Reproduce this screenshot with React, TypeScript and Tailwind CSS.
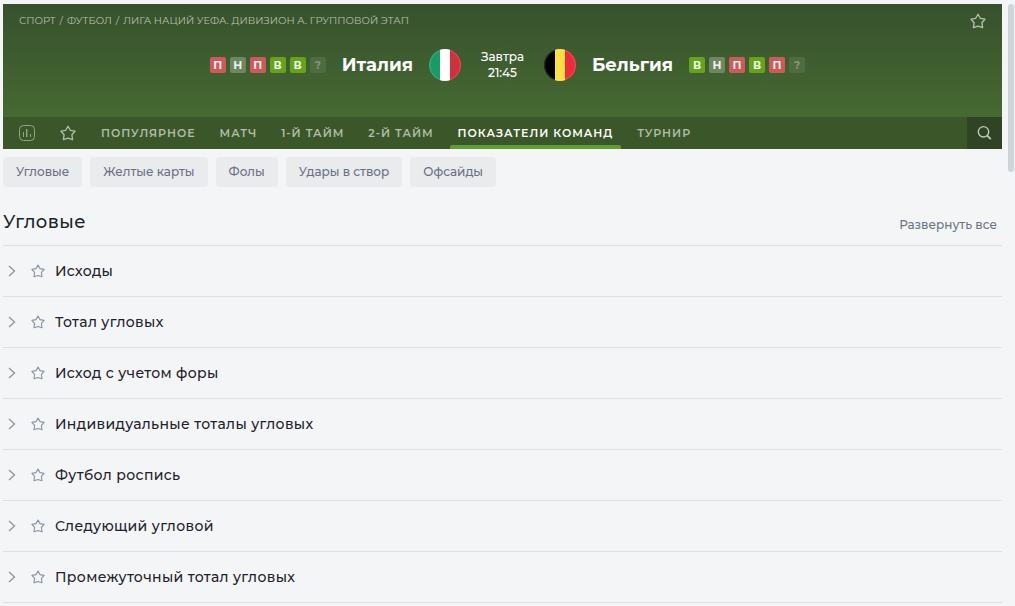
import { useState } from 'react';
import clsx from 'clsx';

type Result = 'П' | 'Н' | 'В' | '?';

const CRUMBS = ['СПОРТ', 'ФУТБОЛ', 'ЛИГА НАЦИЙ УЕФА. ДИВИЗИОН А. ГРУППОВОЙ ЭТАП'];

const HOME_FORM: Result[] = ['П', 'Н', 'П', 'В', 'В', '?'];
const AWAY_FORM: Result[] = ['В', 'Н', 'П', 'В', 'П', '?'];

const TABS = ['Популярное', 'Матч', '1-й тайм', '2-й тайм', 'Показатели команд', 'Турнир'];

const FILTERS = ['Угловые', 'Желтые карты', 'Фолы', 'Удары в створ', 'Офсайды'];

const MARKETS = [
  'Исходы',
  'Тотал угловых',
  'Исход с учетом форы',
  'Индивидуальные тоталы угловых',
  'Футбол роспись',
  'Следующий угловой',
  'Промежуточный тотал угловых',
];

const RESULT_STYLE: Record<Result, string> = {
  П: 'bg-[#cd5a5a] text-white/90',
  Н: 'bg-[#6d8763] text-white/90',
  В: 'bg-[#66a31a] text-white/90',
  '?': 'bg-[#4e6b41] text-[#84977b]',
};

function StarIcon({ className }: { className?: string }) {
  return (
    <svg viewBox="0 0 16 16" fill="none" stroke="currentColor" strokeWidth="1.3" strokeLinejoin="round" className={className}>
      <path d="M8 1.2 10.3 5.3 15 6.2 11.9 9.7 12.6 14.6 8 13.1 3.4 14.6 4.1 9.7 1 6.2 5.7 5.3Z" />
    </svg>
  );
}

function StatsIcon() {
  return (
    <svg viewBox="0 0 16 16" fill="none" stroke="currentColor" className="size-4">
      <rect x=".5" y=".5" width="15" height="15" rx="4" />
      <path d="M4.5 7v5M7.5 4v8M11.5 9v3" />
      <path d="M8.5 4v8" opacity=".4" />
    </svg>
  );
}

function SearchIcon() {
  return (
    <svg viewBox="0 0 16 16" fill="none" stroke="currentColor" className="size-4">
      <circle cx="6.5" cy="6.8" r="5.2" strokeWidth="1.4" />
      <path d="m10.2 10.6 3.6 3.6" strokeWidth="1.8" />
    </svg>
  );
}

function ChevronIcon() {
  return (
    <svg viewBox="0 0 8 12" fill="none" stroke="currentColor" strokeWidth="1.3" className="h-3 w-2">
      <path d="m1 1 5.5 5L1 11" />
    </svg>
  );
}

function Flag({ stripes, label }: { stripes: [string, string, string]; label: string }) {
  return (
    <svg viewBox="0 0 32 32" role="img" aria-label={label} className="size-8 shrink-0 overflow-hidden rounded-full">
      <rect width="11" height="32" fill={stripes[0]} />
      <rect x="11" width="10" height="32" fill={stripes[1]} />
      <rect x="21" width="11" height="32" fill={stripes[2]} />
      <circle cx="16" cy="16" r="15.5" fill="none" stroke="#fff" strokeOpacity=".2" />
    </svg>
  );
}

function TeamForm({ results }: { results: Result[] }) {
  return (
    <ul className="flex gap-1">
      {results.map((r, i) => (
        <li
          key={i}
          className={clsx(
            'flex size-4 items-center justify-center rounded-xs text-[11px] leading-4 font-bold',
            RESULT_STYLE[r],
          )}
        >
          {r}
        </li>
      ))}
    </ul>
  );
}

function MatchHeader() {
  const [tab, setTab] = useState('Показатели команд');

  return (
    <header className="bg-linear-to-b from-[#37512d] to-[#4a7132] text-white">
      <div className="flex h-[34px] items-center justify-between px-4">
        <nav aria-label="Навигация" className="flex gap-1 text-[10px] leading-4 text-[#b4c2ac]">
          {CRUMBS.map((crumb, i) => (
            <span key={crumb} className="flex gap-1">
              {i > 0 && <span>/</span>}
              <a href="#">{crumb}</a>
            </span>
          ))}
        </nav>
        <button type="button" aria-label="В избранное" className="text-[#b4c2ac]">
          <StarIcon className="size-4" />
        </button>
      </div>

      <div className="grid grid-cols-[1fr_auto_1fr] items-center pt-[11px] pb-9">
        <div className="flex items-center justify-end gap-4">
          <TeamForm results={HOME_FORM} />
          <span className="text-lg leading-6 font-bold">Италия</span>
          <Flag label="Италия" stripes={['#199b66', '#ffffff', '#d22f3c']} />
        </div>
        <div className="w-[83px] text-center text-xs leading-4 font-medium">
          <div>Завтра</div>
          <div>21:45</div>
        </div>
        <div className="flex items-center gap-4">
          <Flag label="Бельгия" stripes={['#000000', '#fbe044', '#ee2b3b']} />
          <span className="text-lg leading-6 font-bold">Бельгия</span>
          <TeamForm results={AWAY_FORM} />
        </div>
      </div>

      <div className="flex h-8 bg-[#3b5729] text-[#b1bca9]">
        <div className="flex items-center gap-[25px] pr-[17px] pl-4">
          <button type="button" aria-label="Статистика" className="text-[#93a588]">
            <StatsIcon />
          </button>
          <button type="button" aria-label="Избранное">
            <StarIcon className="size-4" />
          </button>
        </div>
        <div role="tablist" className="flex flex-1 gap-2">
          {TABS.map((t) => (
            <button
              key={t}
              type="button"
              role="tab"
              aria-selected={t === tab}
              onClick={() => setTab(t)}
              className={clsx(
                'relative px-2 text-[11px] font-semibold tracking-[1px] whitespace-nowrap uppercase',
                t === tab && 'text-white',
              )}
            >
              {t}
              {t === tab && <span className="absolute inset-x-0 bottom-0 h-1 rounded-t-xs bg-[#5f9c34]" />}
            </button>
          ))}
        </div>
        <button
          type="button"
          aria-label="Поиск"
          className="flex w-[35px] items-center justify-center bg-[#2f4424] text-[#c1c8bc]"
        >
          <SearchIcon />
        </button>
      </div>
    </header>
  );
}

export default function App() {
  return (
    <div className="flex min-h-screen bg-[#f4f5f7] pt-1 pr-px pl-[3px] font-['Montserrat',Inter,sans-serif] text-[#1d222b]">
      <main className="min-w-0 flex-1">
        <MatchHeader />

        <div className="flex flex-wrap gap-2 pt-2">
          {FILTERS.map((f) => (
            <button
              key={f}
              type="button"
              className="h-[30px] rounded-sm bg-[#eaebed] px-[13px] text-xs font-medium text-[#6a6f85]"
            >
              {f}
            </button>
          ))}
        </div>

        <div className="flex items-center justify-between pt-5 pr-[5px] pb-2">
          <h2 className="text-lg leading-[30px] font-medium tracking-wide">Угловые</h2>
          <button type="button" className="pt-[6px] text-xs leading-5 font-medium text-[#6b7484]">
            Развернуть все
          </button>
        </div>

        <ul className="border-t border-[#dde1e7]">
          {MARKETS.map((m) => (
            <li key={m} className="border-b border-[#dde1e7]">
              <button type="button" aria-expanded="false" className="flex h-[50px] w-full items-center pl-[5px] text-left">
                <span className="text-[#8e949d]">
                  <ChevronIcon />
                </span>
                <StarIcon className="ml-[15px] size-[14px] text-[#8a94a3]" />
                <span className="pl-[10px] text-sm font-medium tracking-wide">{m}</span>
              </button>
            </li>
          ))}
        </ul>
      </main>

      <div aria-hidden className="ml-[6px] h-[168px] w-[6px] rounded-full bg-[#cfd6db]" />
    </div>
  );
}
